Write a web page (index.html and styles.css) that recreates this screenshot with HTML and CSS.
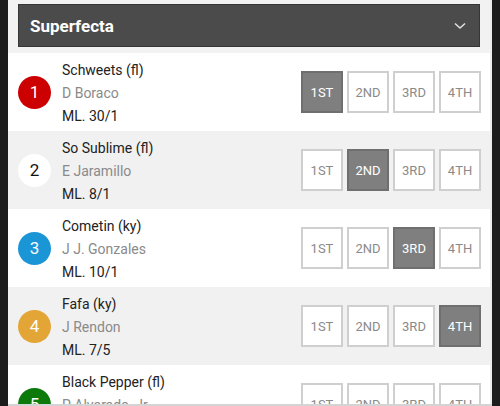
FILE: index.html
```html
<!DOCTYPE html>
<html lang="en">
<head>
  <meta charset="UTF-8" />
  <meta name="viewport" content="width=device-width, initial-scale=1.0" />
  <title>Superfecta</title>
  <link rel="stylesheet" href="styles.css">
</head>
<body>
  <div class="panel">
    <div class="header-wrap">
      <div class="header">
        <span class="title">Superfecta</span>
        <svg class="chevron" width="12" height="8" viewBox="0 0 12 8"><path d="M1 1.5 L6 6 L11 1.5" fill="none" stroke="#e0e0e0" stroke-width="1.6"/></svg>
      </div>
    </div>

    <div class="row">
      <div class="num red">1</div>
      <div class="info">
        <div class="name">Schweets (fl)</div>
        <div class="jockey">D Boraco</div>
        <div class="odds">ML. 30/1</div>
      </div>
      <div class="picks">
        <div class="pick on">1ST</div>
        <div class="pick">2ND</div>
        <div class="pick">3RD</div>
        <div class="pick">4TH</div>
      </div>
    </div>

    <div class="row alt">
      <div class="num white">2</div>
      <div class="info">
        <div class="name">So Sublime (fl)</div>
        <div class="jockey">E Jaramillo</div>
        <div class="odds">ML. 8/1</div>
      </div>
      <div class="picks">
        <div class="pick">1ST</div>
        <div class="pick on">2ND</div>
        <div class="pick">3RD</div>
        <div class="pick">4TH</div>
      </div>
    </div>

    <div class="row">
      <div class="num blue">3</div>
      <div class="info">
        <div class="name">Cometin (ky)</div>
        <div class="jockey">J J. Gonzales</div>
        <div class="odds">ML. 10/1</div>
      </div>
      <div class="picks">
        <div class="pick">1ST</div>
        <div class="pick">2ND</div>
        <div class="pick on">3RD</div>
        <div class="pick">4TH</div>
      </div>
    </div>

    <div class="row alt">
      <div class="num gold">4</div>
      <div class="info">
        <div class="name">Fafa (ky)</div>
        <div class="jockey">J Rendon</div>
        <div class="odds">ML. 7/5</div>
      </div>
      <div class="picks">
        <div class="pick">1ST</div>
        <div class="pick">2ND</div>
        <div class="pick">3RD</div>
        <div class="pick on">4TH</div>
      </div>
    </div>

    <div class="row">
      <div class="num green">5</div>
      <div class="info">
        <div class="name">Black Pepper (fl)</div>
        <div class="jockey">P Alvarado, Jr.</div>
        <div class="odds">ML. 5/1</div>
      </div>
      <div class="picks">
        <div class="pick">1ST</div>
        <div class="pick">2ND</div>
        <div class="pick">3RD</div>
        <div class="pick">4TH</div>
      </div>
    </div>
  </div>
  <div class="bottom-edge"></div>
</body>
</html>
```

FILE: styles.css
```css
body {
  margin: 0;
  background-color: #1c1c1c;
  font-family: Roboto, 'Liberation Sans', Arial, sans-serif;
  height: 406px;
  overflow: hidden;
}
.panel {
  margin: 0 8px;
  background-color: #fff;
  border-right: 2px solid #ececec;
  min-height: 406px;
}
.header-wrap {
  background-color: #f2f2f2;
  padding: 4px 10px 6px 10px;
}
.header {
  height: 41px;
  background-color: #4b4b4b;
  border: 1px solid #363636;
  display: flex;
  align-items: center;
  justify-content: space-between;
  padding: 0 13px 0 11px;
}
.title {
  color: #fff;
  font-weight: bold;
  font-size: 17px;
}
.row {
  height: 78px;
  display: flex;
  align-items: center;
  padding: 0 9px 0 10px;
  background-color: #fff;
}
.row.alt {
  background-color: #f1f1f1;
}
.num {
  width: 33px;
  height: 33px;
  border-radius: 50%;
  display: flex;
  justify-content: center;
  align-items: center;
  font-size: 17px;
  color: #fff;
  flex-shrink: 0;
}
.red { background-color: #cc0000; }
.white { background-color: #fff; color: #111; }
.blue { background-color: #1a95d5; }
.gold { background-color: #e3a536; }
.green { background-color: #0b7a0b; }
.info {
  flex: 1;
  margin-left: 11px;
  font-size: 14px;
  line-height: 23px;
  color: #222;
  padding-top: 3px;
}
.jockey {
  color: #8a8a8a;
}
.picks {
  display: flex;
  gap: 4px;
}
.pick {
  width: 42px;
  height: 42px;
  box-sizing: border-box;
  border: 2px solid #cfcfcf;
  background-color: #fff;
  color: #8a8a8a;
  font-size: 13px;
  display: flex;
  justify-content: center;
  align-items: center;
}
.pick.on {
  background-color: #7f7f7f;
  border-color: #6f6f6f;
  color: #fff;
}
.bottom-edge {
  position: fixed;
  left: 8px;
  right: 8px;
  bottom: 0;
  height: 2px;
  background-color: #d4d4d4;
}
```
